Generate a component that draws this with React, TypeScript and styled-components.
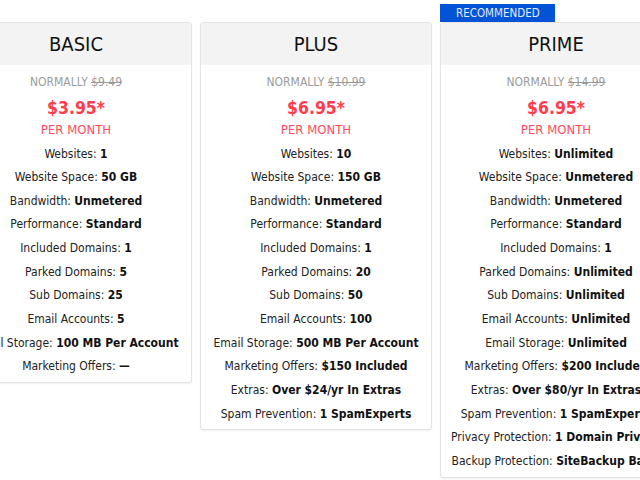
import React from 'react'
import styled, { createGlobalStyle } from 'styled-components'

const GlobalStyle = createGlobalStyle`
  html, body {
    margin: 0;
    padding: 0;
    background: #ffffff;
    overflow: hidden;
  }
  body {
    font-family: 'DejaVu Sans Condensed', 'DejaVu Sans', 'Liberation Sans', sans-serif;
    color: #222;
  }
`

const Page = styled.div`
  width: 640px;
  height: 480px;
  overflow: hidden;
`

const CardRow = styled.div`
  display: flex;
  align-items: flex-start;
  gap: 8px;
  margin-left: -40px;
  padding-top: 4px;
`

const CardColumn = styled.div`
  display: flex;
  flex-direction: column;
  align-items: flex-start;
  flex: 0 0 232px;
  width: 232px;
`

const Ribbon = styled.div<{ $hidden?: boolean }>`
  height: 18px;
  line-height: 18px;
  padding: 0 15px 0 16px;
  font-size: 11.5px;
  color: #e4ecff;
  background: #0353d6;
  visibility: ${({ $hidden }) => ($hidden ? 'hidden' : 'visible')};
`

const Card = styled.div`
  width: 100%;
  box-sizing: border-box;
  border: 1px solid #e3e3e3;
  border-radius: 3px;
  background: #fff;
  box-shadow: 0 1px 2px rgba(0, 0, 0, 0.06);
  overflow: hidden;
`

const CardHeader = styled.div`
  height: 42px;
  display: flex;
  align-items: center;
  justify-content: center;
  background: #f3f3f3;
  font-size: 20px;
  color: #111;
`

const CardBody = styled.div`
  display: flex;
  flex-direction: column;
  align-items: center;
  padding: 8px 0 3px;
  text-align: center;
  white-space: nowrap;
`

const Normally = styled.div`
  height: 18px;
  line-height: 18px;
  font-size: 12px;
  color: #9a9a9a;
  margin-bottom: 5px;

  s {
    text-decoration: line-through;
  }
`

const Price = styled.div`
  height: 24px;
  line-height: 24px;
  font-size: 17.5px;
  font-weight: bold;
  color: #ff3c4c;
  margin-bottom: 1px;
`

const PerMonth = styled.div`
  height: 18px;
  line-height: 18px;
  font-size: 13px;
  color: #ff4b58;
  margin-bottom: 3.5px;
`

const FeatureList = styled.ul`
  list-style: none;
  margin: 0;
  padding: 0;
  width: 100%;
`

const Feature = styled.li`
  height: 23.67px;
  line-height: 23.67px;
  font-size: 12px;
  color: #222;

  b {
    color: #111;
  }
`

type Plan = {
  name: string
  normal: string
  price: string
  recommended?: boolean
  features: [string, string][]
}

const plans: Plan[] = [
  {
    name: 'BASIC',
    normal: '$9.49',
    price: '$3.95*',
    features: [
      ['Websites', '1'],
      ['Website Space', '50 GB'],
      ['Bandwidth', 'Unmetered'],
      ['Performance', 'Standard'],
      ['Included Domains', '1'],
      ['Parked Domains', '5'],
      ['Sub Domains', '25'],
      ['Email Accounts', '5'],
      ['Email Storage', '100 MB Per Account'],
      ['Marketing Offers', '—'],
    ],
  },
  {
    name: 'PLUS',
    normal: '$10.99',
    price: '$6.95*',
    features: [
      ['Websites', '10'],
      ['Website Space', '150 GB'],
      ['Bandwidth', 'Unmetered'],
      ['Performance', 'Standard'],
      ['Included Domains', '1'],
      ['Parked Domains', '20'],
      ['Sub Domains', '50'],
      ['Email Accounts', '100'],
      ['Email Storage', '500 MB Per Account'],
      ['Marketing Offers', '$150 Included'],
      ['Extras', 'Over $24/yr In Extras'],
      ['Spam Prevention', '1 SpamExperts'],
    ],
  },
  {
    name: 'PRIME',
    normal: '$14.99',
    price: '$6.95*',
    recommended: true,
    features: [
      ['Websites', 'Unlimited'],
      ['Website Space', 'Unmetered'],
      ['Bandwidth', 'Unmetered'],
      ['Performance', 'Standard'],
      ['Included Domains', '1'],
      ['Parked Domains', 'Unlimited'],
      ['Sub Domains', 'Unlimited'],
      ['Email Accounts', 'Unlimited'],
      ['Email Storage', 'Unlimited'],
      ['Marketing Offers', '$200 Included'],
      ['Extras', 'Over $80/yr In Extras'],
      ['Spam Prevention', '1 SpamExperts'],
      ['Privacy Protection', '1 Domain Privacy'],
      ['Backup Protection', 'SiteBackup Basic'],
    ],
  },
]

function PlanCard({ plan }: { plan: Plan }) {
  return (
    <CardColumn>
      <Ribbon $hidden={!plan.recommended}>RECOMMENDED</Ribbon>
      <Card>
        <CardHeader>{plan.name}</CardHeader>
        <CardBody>
          <Normally>
            NORMALLY <s>{plan.normal}</s>
          </Normally>
          <Price>{plan.price}</Price>
          <PerMonth>PER MONTH</PerMonth>
          <FeatureList>
            {plan.features.map(([label, value]) => (
              <Feature key={label}>
                {label}: <b>{value}</b>
              </Feature>
            ))}
          </FeatureList>
        </CardBody>
      </Card>
    </CardColumn>
  )
}

export default function App() {
  return (
    <Page>
      <GlobalStyle />
      <CardRow>
        {plans.map((plan) => (
          <PlanCard key={plan.name} plan={plan} />
        ))}
      </CardRow>
    </Page>
  )
}
